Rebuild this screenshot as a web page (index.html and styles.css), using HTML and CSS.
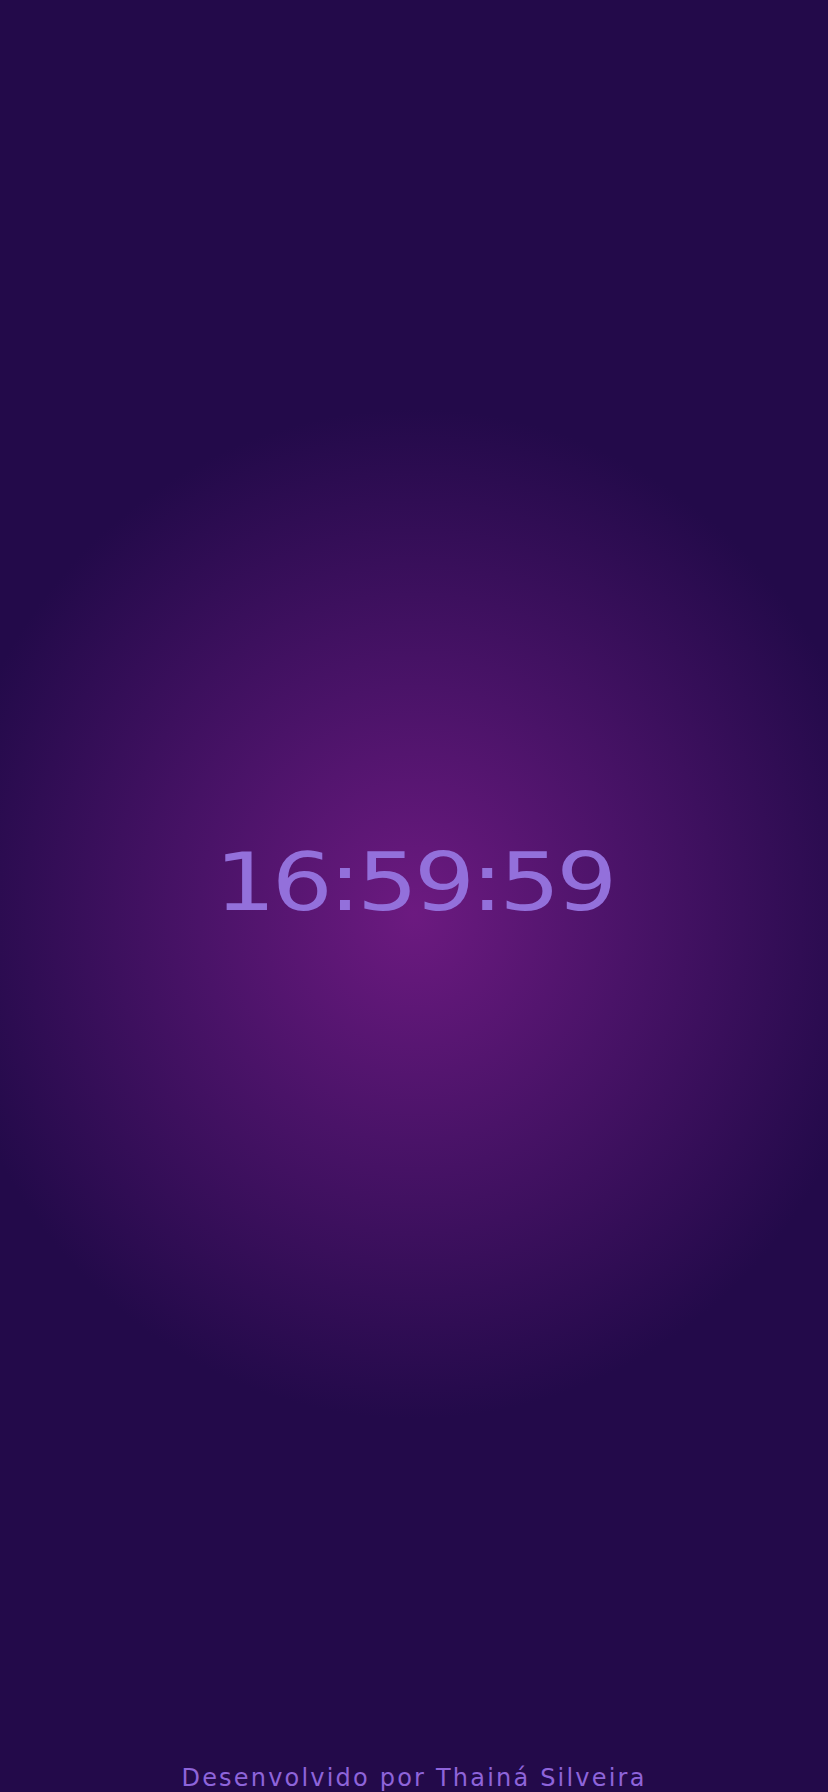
FILE: index.html
```html
<!DOCTYPE html>
<html lang="pt-BR">
<head>
<meta charset="utf-8">
<title>Relógio</title>
<link rel="stylesheet" href="styles.css">
</head>
<body>
<main class="stage">
  <div class="clock">16:59:59</div>
</main>
<footer class="credit">Desenvolvido por Thainá Silveira</footer>
</body>
</html>
```

FILE: styles.css
```css
html, body {
  margin: 0;
  padding: 0;
}
body {
  min-height: 100vh;
  display: flex;
  flex-direction: column;
  background: radial-gradient(ellipse 475px 505px at 50% 51%, #6c1a80 0%, #4a1368 45%, #230a4a 100%);
  background-color: #230a4a;
  font-family: "DejaVu Sans", "Liberation Sans", sans-serif;
  color: #9370db;
}
.stage {
  flex: 1;
  display: flex;
  align-items: center;
  justify-content: center;
}
.clock {
  display: inline-block;
  font-size: 80px;
  line-height: normal;
  letter-spacing: -3.4px;
  transform: scaleX(1.2);
  color: #9370db;
}
.credit {
  text-align: center;
  font-size: 24px;
  line-height: normal;
  letter-spacing: 2.2px;
  color: #8e64da;
}
```
